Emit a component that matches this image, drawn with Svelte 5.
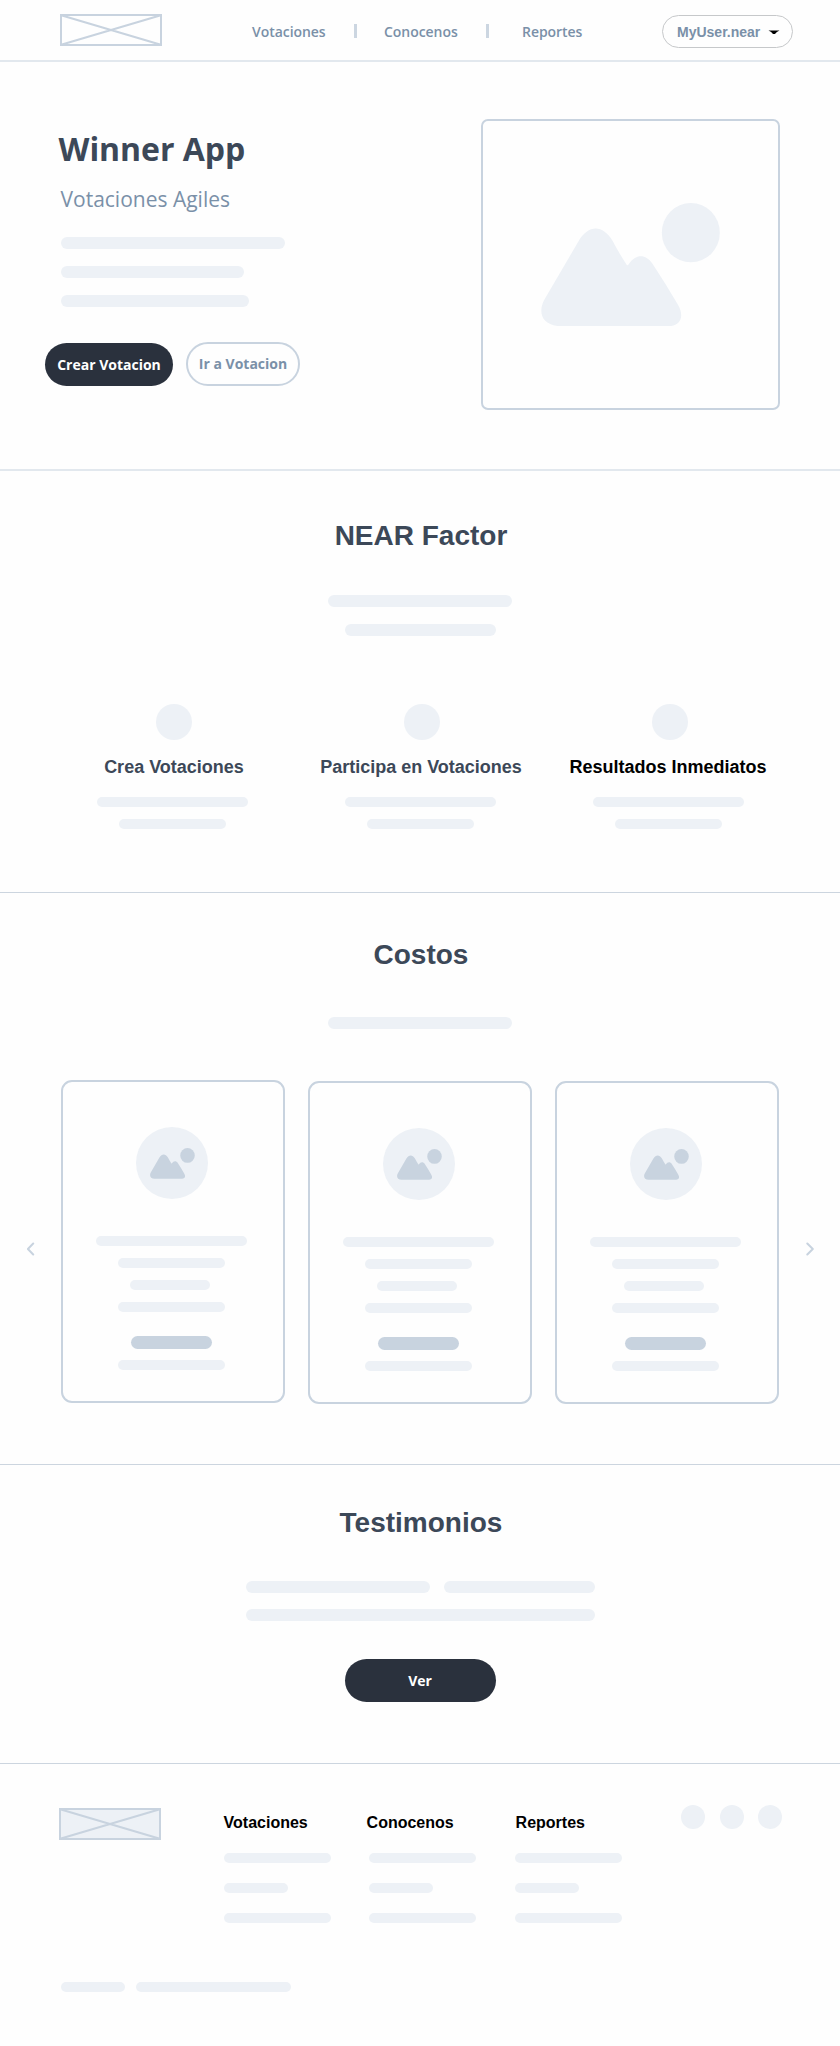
<script>
  const features = [
    { title: 'Crea Votaciones', strong: false },
    { title: 'Participa en Votaciones', strong: false },
    { title: 'Resultados Inmediatos', strong: true }
  ];
  const cards = [1, 2, 3];
  const footerColumns = ['Votaciones', 'Conocenos', 'Reportes'];
</script>

{#snippet picture()}
  <svg class="picture" viewBox="212 308 537 371" aria-hidden="true">
    <path d="M268 677.500C216 675 202 639 221 600L325 422C354 372 398 372 427 422Q447 460 469 493Q471.500 497 475 492C496 460 526 460 547 491Q586 550 622 612C645 650 628 677.500 595 677.500Z" />
    <ellipse cx="661.500" cy="397" rx="87" ry="89" />
  </svg>
{/snippet}

{#snippet logo(filled)}
  <svg class="logo" class:filled viewBox="0 0 102 32" aria-hidden="true">
    <rect x="1" y="1" width="100" height="30" />
    <path d="M2 1.500L100 30.500M2 30.500L100 1.500" />
  </svg>
{/snippet}

<div class="page">
  <header>
    {@render logo(false)}
    <nav>
      <a href="#votaciones">Votaciones</a>
      <i></i>
      <a href="#conocenos">Conocenos</a>
      <i></i>
      <a href="#reportes">Reportes</a>
    </nav>
    <button class="user">
      MyUser.near
      <svg width="12" height="5" viewBox="0 0 12 5" aria-hidden="true"><path d="M.5 .5H11.500Q8.500 1.500 7 4H5Q3.500 1.500 .5 .5Z" /></svg>
    </button>
  </header>

  <section class="hero">
    <div class="intro">
      <h1>Winner App</h1>
      <p>Votaciones Agiles</p>
      <div class="lines">
        <span class="bar" style:width="224px"></span>
        <span class="bar" style:width="183px"></span>
        <span class="bar" style:width="188px"></span>
      </div>
      <div class="actions">
        <button class="solid create">Crear Votacion</button>
        <button class="outline">Ir a Votacion</button>
      </div>
    </div>
    <div class="frame">{@render picture()}</div>
  </section>

  <section class="factor">
    <h2>NEAR Factor</h2>
    <div class="lines">
      <span class="bar" style:width="184px"></span>
      <span class="bar" style:width="151px"></span>
    </div>
    <div class="features">
      {#each features as f}
        <article>
          <span class="dot"></span>
          <h3 class:strong={f.strong}>{f.title}</h3>
          <span class="bar thin" style:width="151px"></span>
          <span class="bar thin" style:width="107px"></span>
        </article>
      {/each}
    </div>
  </section>

  <section class="costs">
    <h2>Costos</h2>
    <span class="bar" style:width="184px"></span>
    <div class="carousel">
      <svg class="arrow" width="8" height="14" viewBox="0 0 8 14" aria-hidden="true"><path d="M6.200 1.500L.9 7L6.200 12.500" /></svg>
      <div class="cards">
        {#each cards as c}
          <article class="card">
            <span class="avatar">{@render picture()}</span>
            <span class="bar thin first"></span>
            <span class="bar thin"></span>
            <span class="bar thin short"></span>
            <span class="bar thin"></span>
            <span class="bar dark"></span>
            <span class="bar thin"></span>
          </article>
        {/each}
      </div>
      <svg class="arrow" width="8" height="14" viewBox="0 0 8 14" aria-hidden="true"><path d="M1.300 1.500L6.800 7L1.300 12.500" /></svg>
    </div>
  </section>

  <section class="testimonials">
    <h2>Testimonios</h2>
    <div class="quote">
      <span class="bar" style:width="184px"></span>
      <span class="bar" style:width="151px"></span>
      <span class="bar wide"></span>
    </div>
    <button class="solid view">Ver</button>
  </section>

  <footer>
    <div class="top">
      {@render logo(true)}
      <div class="columns">
        {#each footerColumns as title}
          <div class="column">
            <h4>{title}</h4>
            <span class="bar thin" style:width="107px"></span>
            <span class="bar thin" style:width="64px"></span>
            <span class="bar thin" style:width="107px"></span>
          </div>
        {/each}
      </div>
      <div class="social"><span></span><span></span><span></span></div>
    </div>
    <div class="legal">
      <span class="bar thin" style:width="64px"></span>
      <span class="bar thin" style:width="155px"></span>
    </div>
  </footer>
</div>

<style>
  :global(body) { margin: 0; background: #fefefe; }
  .page { width: 840px; height: 2046px; overflow: hidden; background: #fefefe; font-family: "Liberation Sans", Arial, sans-serif; color: #3c4858; }
  .page * { box-sizing: border-box; }
  h1, h2, h3, h4, p { margin: 0; }
  button { font: inherit; border: 0; padding: 0; margin: 0; white-space: nowrap; }
  section { border-bottom: 1px solid #ccd5df; }

  .bar { display: block; flex: none; height: 12px; border-radius: 6px; background: #edf1f6; }
  .bar.thin { height: 10px; border-radius: 5px; }
  .logo { display: block; flex: none; width: 102px; height: 32px; fill: none; stroke: #c8d3df; stroke-width: 2; }
  .logo.filled { fill: #edf1f6; }
  .picture { display: block; fill: #edf1f6; }

  header { display: flex; height: 62px; padding: 14px 0 0 60px; border-bottom: 2px solid #e2e8ee; }
  nav { display: flex; margin-left: 90px; font: 600 14px/20px "Open Sans", sans-serif; letter-spacing: -0.050px; }
  nav a { width: 102px; margin-top: 8px; color: #7a90a8; text-decoration: none; }
  nav a:nth-of-type(3) { width: 61px; margin-left: 6px; }
  nav i { width: 3px; height: 14px; margin: 10px 27px 0 0; background: #ccd6e1; }
  .user { display: flex; gap: 8px; width: 131px; height: 33px; margin: 1px 0 0 79px; padding: 7px 0 0 14px; border: 1px solid #c6c8ca; border-radius: 17px; background: #fefefe; color: #7a90a8; font: bold 14px/18px "Liberation Sans", Arial, sans-serif; }
  .user svg { margin-top: 7px; fill: #000; }

  .hero { display: flex; height: 409px; padding: 57px 0 0 60px; border-bottom: 2px solid #e2e8ee; }
  .intro { width: 421px; padding-top: 8px; }
  h1 { margin-left: -1.500px; font: bold 32px/44px "Open Sans", sans-serif; letter-spacing: -0.050px; }
  .intro p { margin: 13px 0 0 0.500px; color: #7a90a8; font: 400 21px/30px "Open Sans", sans-serif; }
  .lines { display: flex; flex-direction: column; gap: 17px; }
  .intro .lines { margin: 23px 0 0 0.600px; }
  .actions { display: flex; align-items: flex-end; gap: 13px; margin: 35px 0 0 -15px; font: bold 14px/20px "Open Sans", sans-serif; }
  .solid { height: 43px; border-radius: 22px; background: #2a313d; color: #fff; }
  .create { width: 128px; }
  .outline { width: 114px; height: 44px; border: 2px solid #c8d3df; border-radius: 22px; background: #fefefe; color: #7a90a8; }
  .frame { width: 299px; height: 291px; padding: 81.500px 0 0 57.700px; border: 2px solid #c8d3df; border-radius: 7px; }
  .frame .picture { width: 179px; height: 123.700px; }

  .factor, .costs, .testimonials { display: flex; flex-direction: column; align-items: center; }
  h2 { padding-left: 2px; font-size: 28px; line-height: 36px; }
  .factor { height: 422px; padding-top: 47px; }
  .factor .lines { align-items: center; margin-top: 40.500px; }
  .features { display: grid; grid-template-columns: repeat(3, 248px); margin: 68.500px 0 0 1px; }
  .features article { display: flex; flex-direction: column; align-items: center; }
  .dot { width: 36px; height: 36px; margin-left: 2px; border-radius: 50%; background: #edf1f6; }
  h3 { margin: 14.500px 0 18px 1px; font-size: 18px; line-height: 24px; }
  article:first-child h3 { padding-left: 2px; }
  h3.strong { margin-left: -1px; color: #000; }
  .features .bar + .bar { margin-top: 12px; }

  .costs { height: 572px; padding-top: 44px; }
  .costs > .bar { margin-top: 44px; }
  .carousel { display: flex; width: 840px; margin-top: 51px; padding-left: 26.500px; }
  .arrow { flex: none; margin-top: 162px; fill: none; stroke: #c8d3df; stroke-width: 2; stroke-linecap: round; stroke-linejoin: round; }
  .cards { display: flex; gap: 23px; margin: 0 27px 0 26.500px; }
  .card { display: flex; flex-direction: column; align-items: center; width: 224px; height: 323px; padding: 45px 1px 0 0; border: 2px solid #c8d3df; border-radius: 11px; }
  .card + .card { margin-top: 1px; }
  .avatar { width: 72px; height: 72px; margin-right: 0.600px; padding: 21.300px 0 0 13.800px; border-radius: 50%; background: #edf1f6; }
  .avatar .picture { width: 44.800px; height: 31px; fill: #c8d3df; }
  .card .bar { width: 107px; margin-top: 12px; margin-right: 2px; }
  .card .first { width: 151px; margin-top: 37px; }
  .card .short { width: 80px; margin-right: 5px; }
  .card .dark { width: 81px; height: 13px; margin-top: 24px; margin-right: 3px; background: #c8d3df; border-radius: 7px; }
  .card .dark + .bar { margin-top: 11px; }

  .testimonials { height: 299px; padding-top: 40px; border-bottom-color: #ccd5df; }
  .quote { display: flex; flex-wrap: wrap; justify-content: space-between; row-gap: 16px; width: 349px; margin-top: 39.500px; }
  .quote .wide { width: 349px; }
  .view { width: 151px; margin-top: 38.500px; font: bold 14px/20px "Open Sans", sans-serif; }

  footer { padding: 40px 0 0 59px; }
  .top { display: flex; align-items: flex-start; }
  .top .logo { margin-top: 4px; }
  .columns { display: flex; margin: 9px 0 0 62.600px; }
  .column { width: 145.500px; }
  .column h4 { color: #000; font-size: 16px; line-height: 20px; margin-bottom: 20px; }
  .column:nth-child(2) h4 { margin-left: -2.500px; }
  .column:nth-child(3) h4 { margin-left: 1px; }
  .column .bar + .bar { margin-top: 20px; }
  .social { display: flex; gap: 14px; margin: 0.500px 0 0 20.500px; }
  .social span { width: 24px; height: 24px; border-radius: 50%; background: #edf1f6; }
  .social span:nth-child(2) { margin-left: 1px; }
  .legal { display: flex; gap: 11px; margin: 59px 0 0 2.400px; }
</style>
